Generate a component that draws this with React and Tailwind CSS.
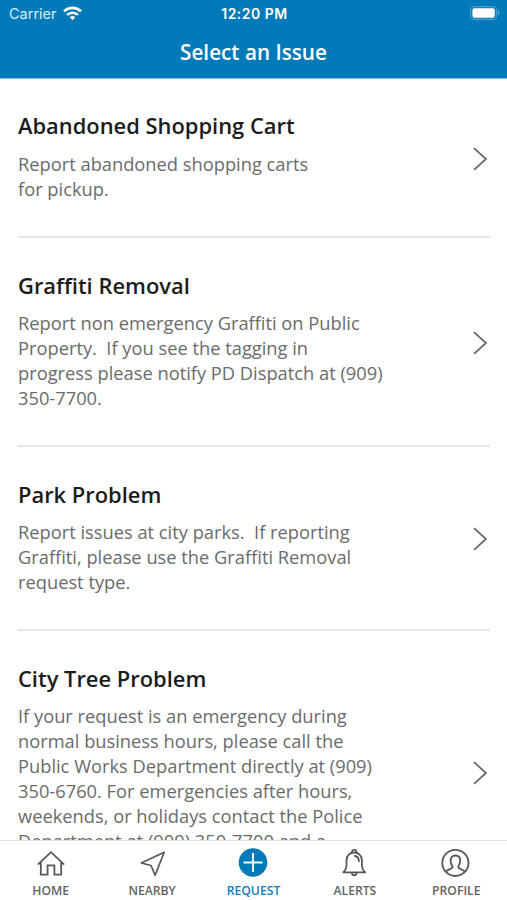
import React from "react";

const issues = [
  {
    title: "Abandoned Shopping Cart",
    text: "Report abandoned shopping carts\nfor pickup.",
  },
  {
    title: "Graffiti Removal",
    text: "Report non emergency Graffiti on Public\nProperty.  If you see the tagging in\nprogress please notify PD Dispatch at (909)\n350-7700.",
  },
  {
    title: "Park Problem",
    text: "Report issues at city parks.  If reporting\nGraffiti, please use the Graffiti Removal\nrequest type.",
  },
  {
    title: "City Tree Problem",
    text: "If your request is an emergency during\nnormal business hours, please call the\nPublic Works Department directly at (909)\n350-6760. For emergencies after hours,\nweekends, or holidays contact the Police\nDepartment at (909) 350-7700 and a\n ",
  },
];

function HomeIcon() {
  return (
    <svg width="30" height="30" viewBox="0 0 30 30" fill="none" stroke="#585858" strokeWidth="1.8">
      <path d="M1.8 16.6 15 4.2l13.2 12.4" />
      <path d="M4.8 14.2v12.5h6.8v-9.4h6.8v9.4h6.8V14.2" />
    </svg>
  );
}

function NearbyIcon() {
  return (
    <svg width="30" height="30" viewBox="0 0 30 30" fill="none" stroke="#585858" strokeWidth="1.7" strokeLinejoin="round">
      <path d="M27.2 4.2 4.3 15l9.7 2.5 4.1 9.7z" />
    </svg>
  );
}

function RequestIcon() {
  return (
    <svg width="30" height="30" viewBox="0 0 30 30" fill="none">
      <circle cx="15" cy="14.5" r="14.3" fill="#007ab8" />
      <path d="M15 5v19M5.5 14.5h19" stroke="white" strokeWidth="1.8" />
    </svg>
  );
}

function AlertsIcon() {
  return (
    <svg width="30" height="30" viewBox="0 0 30 30" fill="none" stroke="#585858" strokeWidth="1.8" strokeLinejoin="round">
      <path d="M11.9 4.2a2.3 2.3 0 0 1 4.6 0" />
      <path d="M3.3 24.4c2.2-2 3.2-4.6 3.2-8.2v-4c0-4.6 3.3-7.7 7.7-7.7s7.7 3.1 7.7 7.7v4c0 3.6 1 6.2 3.2 8.2z" />
      <path d="M11.9 24.8a2.3 2.6 0 0 0 4.6 0" />
      <path d="M14.9 8c2.7.3 4 2.1 4 5.3" strokeLinecap="round" />
    </svg>
  );
}

function ProfileIcon() {
  return (
    <svg width="30" height="30" viewBox="0 0 30 30" fill="none" stroke="#585858" strokeWidth="1.8">
      <circle cx="14.4" cy="14.9" r="13.1" />
      <path d="M4.8 23.6c1.2-1.5 3.4-2.3 5.6-3.2 1.3-.5 1.5-1.7.7-2.8-1-1.4-1.5-3-1.5-4.9 0-3.3 1.8-5.2 4.8-5.2s4.8 1.9 4.8 5.2c0 1.9-.5 3.5-1.5 4.9-.8 1.1-.6 2.3.7 2.8 2.2.9 4.4 1.7 5.6 3.2" />
    </svg>
  );
}

const tabs = [
  { label: "HOME", icon: HomeIcon },
  { label: "NEARBY", icon: NearbyIcon },
  { label: "REQUEST", icon: RequestIcon, active: true },
  { label: "ALERTS", icon: AlertsIcon },
  { label: "PROFILE", icon: ProfileIcon },
];

export default function App() {
  return (
    <div className="flex h-[900px] w-[507px] flex-col overflow-hidden bg-white font-['Open_Sans',sans-serif]">
      {/* Header */}
      <header className="h-[79px] shrink-0 border-b border-[#7cc4e8] bg-[#007ab8] text-white">
        <div className="grid h-7 grid-cols-3 items-center pl-[9px] pr-[7px] font-['Inter',sans-serif]">
          <div className="flex items-center gap-[6px]">
            <span className="text-[14.5px] leading-none text-[#d5edfa]">Carrier</span>
            <svg className="mb-[2px]" width="19" height="15" viewBox="0 0 19 15" fill="none" stroke="white" strokeWidth="2.7">
              <path d="M1 5.3a12.2 12.2 0 0 1 17 0" />
              <path d="M4.1 8.9a7.8 7.8 0 0 1 10.8 0" />
              <path d="M6.7 11.3a4 4 0 0 1 5.6 0L9.5 14.3z" fill="white" stroke="none" />
            </svg>
          </div>
          <span className="text-center text-[14px] font-semibold leading-none tracking-[0.5px]">12:20 PM</span>
          <svg className="mb-[2px] justify-self-end" width="30" height="14" viewBox="0 0 30 14" fill="none">
            <rect x="0.6" y="0.6" width="26" height="12.8" rx="3.6" stroke="#4d9fcc" strokeWidth="1.1" />
            <rect x="2.4" y="2.3" width="22.4" height="9.4" rx="2" fill="white" />
            <path d="M28 4.8c1.6.6 1.6 3.8 0 4.4z" fill="#66afd5" />
          </svg>
        </div>
        <h1 className="pt-[10px] text-center text-[20.7px] font-semibold leading-7">Select an Issue</h1>
      </header>

      {/* Issue list */}
      <main className="min-h-0 flex-1 overflow-hidden pl-[18px] pr-[17px]">
        {issues.map((issue) => (
          <div
            key={issue.title}
            className="flex items-center justify-between border-b-2 border-[#e6e6e6] pb-[34.2px] pt-[33.4px]"
          >
            <div>
              <h2 className="text-[21.9px] font-semibold leading-7 text-[#1c1c1c]">{issue.title}</h2>
              <p className="mt-[11.8px] whitespace-pre text-[18.3px] leading-[24.9px] text-[#6b6b6b]">{issue.text}</p>
            </div>
            <svg className="mr-[2px] mt-[3px] shrink-0" width="16" height="24" viewBox="0 0 16 24" fill="none">
              <path d="M2 1.2 14 12 2 22.8" stroke="#666" strokeWidth="1.7" />
            </svg>
          </div>
        ))}
      </main>

      {/* Tab bar */}
      <nav className="grid h-[60px] shrink-0 grid-cols-5 border-t border-[#dedede] bg-white">
        {tabs.map(({ label, icon: Icon, active }) => (
          <button key={label} className="flex flex-col items-center pt-[7px]">
            <Icon />
            <span
              className={
                active
                  ? "mt-[5px] text-[12.2px] font-semibold leading-4 text-[#0e80bb]"
                  : "mt-[5px] text-[12.2px] font-semibold leading-4 text-[#636363]"
              }
            >
              {label}
            </span>
          </button>
        ))}
      </nav>
    </div>
  );
}
